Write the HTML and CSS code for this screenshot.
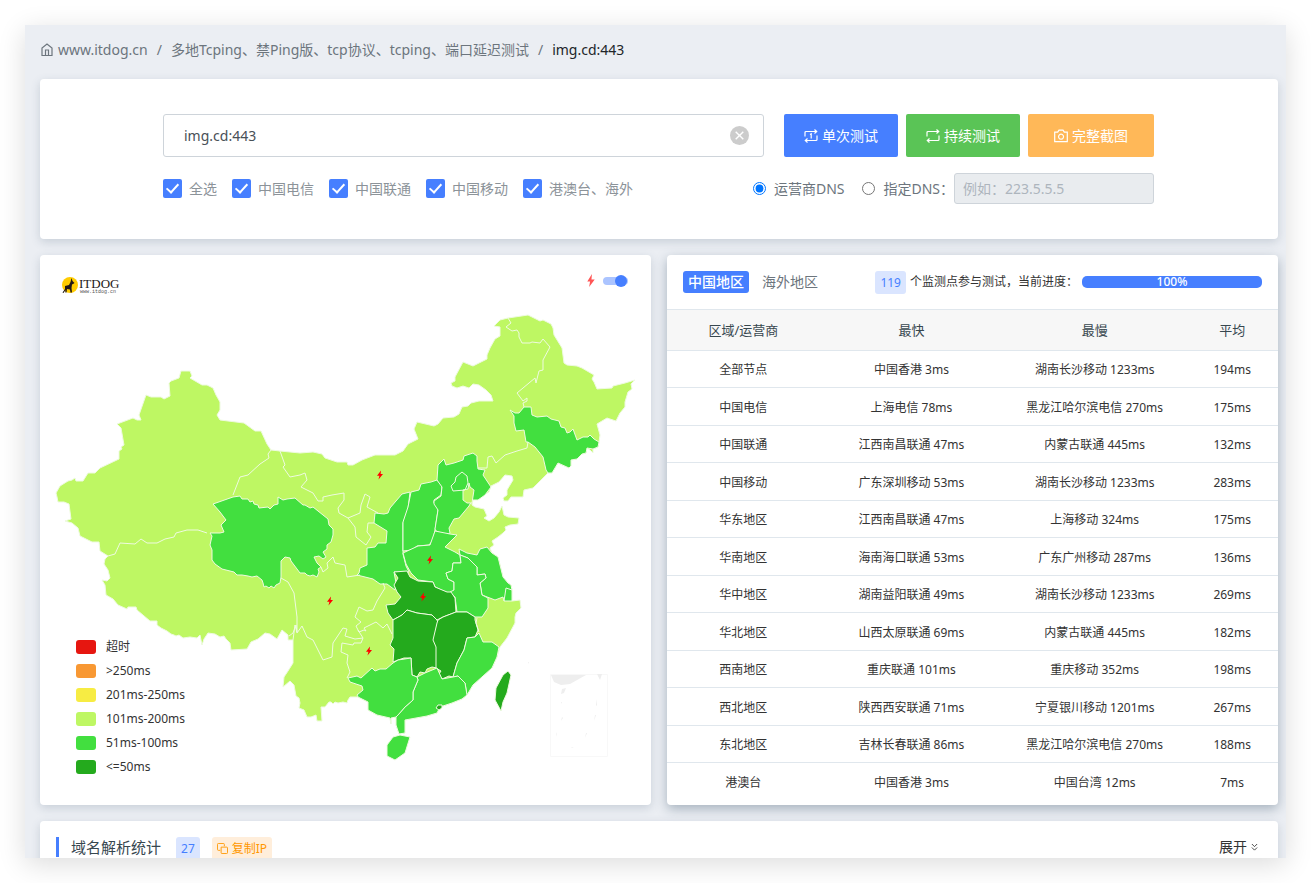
FILE: index.html
```html
<!DOCTYPE html>
<html lang="zh-CN">
<head>
    <meta charset="UTF-8">
    <meta name="viewport" content="width=device-width, initial-scale=1.0">
    <title>img.cd:443 - Tcping</title>
    <link rel="stylesheet" href="styles.css">
</head>
<body>

    <div class="shell">
        <!-- Breadcrumb -->
        <nav class="breadcrumb">
            <a href="#"><svg class="icon" viewBox="0 0 14 14"><path d="M2 12.500V5L7 1l5 4v7.500zM5.500 12.500V7h3v5.500"/></svg>www.itdog.cn</a>
            <span class="sep">/</span>
            <a href="#">多地Tcping、禁Ping版、tcp协议、tcping、端口延迟测试</a>
            <span class="sep">/</span>
            <span class="current">img.cd:443</span>
        </nav>

        <!-- Test form -->
        <form class="card test-form">
            <div class="form-inner">
                <div class="form-row">
                    <div class="host-field">
                        <input type="text" class="host-input" aria-label="域名" value="img.cd:443">
                        <button type="button" class="clear-btn" aria-label="清空"><svg viewBox="0 0 20 20"><path d="M6 6l8 8M14 6l-8 8"/></svg></button>
                    </div>
                    <div class="actions">
                        <button type="button" class="btn btn-blue"><svg class="icon" viewBox="0 0 14 14"><path d="M1 7.500V3.500a1 1 0 0 1 1-1h11M10.500.5l2.200 2-2.200 2M13 6.500v4a1 1 0 0 1-1 1H1M3.500 9.500l-2.200 2 2.200 2M6 5.500l1.200-.7v4.700"/></svg>单次测试</button>
                        <button type="button" class="btn btn-green"><svg class="icon" viewBox="0 0 14 14"><path d="M1 7.500V3.500a1 1 0 0 1 1-1h11M10.500.5l2.200 2-2.200 2M13 6.500v4a1 1 0 0 1-1 1H1M3.500 9.500l-2.200 2 2.200 2"/></svg>持续测试</button>
                        <button type="button" class="btn btn-orange"><svg class="icon" viewBox="0 0 14 14"><path d="M.7 3.200h3L5 1.200h4l1.300 2h3v9.500H.7zM7 5.200a2.500 2.500 0 1 0 .1 0z"/></svg>完整截图</button>
                    </div>
                </div>
                <div class="form-row">
                    <div class="checks">
                        <label class="check"><input type="checkbox" checked>全选</label>
                        <label class="check"><input type="checkbox" checked>中国电信</label>
                        <label class="check"><input type="checkbox" checked>中国联通</label>
                        <label class="check"><input type="checkbox" checked>中国移动</label>
                        <label class="check"><input type="checkbox" checked>港澳台、海外</label>
                    </div>
                    <div class="dns">
                        <label class="radio"><input type="radio" name="dns" checked>运营商DNS</label>
                        <label class="radio"><input type="radio" name="dns">指定DNS：</label>
                        <input type="text" class="dns-input" aria-label="指定DNS" placeholder="例如：223.5.5.5" disabled>
                    </div>
                </div>
            </div>
        </form>

        <div class="columns">
            <!-- Map -->
            <section class="card map-card">
                <svg class="map" viewBox="40 255 611 550">
                    <defs>
                        <path id="bolt" d="M1-4.500-3 .7-.6.7-1.500 4.500 3-.9.6-.9z"/>
                    </defs>
                    <!-- mainland -->
                    <path class="lv-200" d="M56 493L60 486 68 481 72 480 75 478 76 481 83 481 88 473 95 473 100 468 119 459 119 451 122 449 121 447 124 445 121 428 117 424 133 418 137 420 141 420 139 415 146 395 151 397 161 397 164 399 170 396 169 383 171 381 179 378 181 371 190 371 192 376 190 378 202 385 207 385 213 388 216 395 220 402 220 410 217 415 220 420 244 423 255 431 261 431 267 444 271 450 280 451 300 453 313 452 322 454 325 458 337 462 347 462 348 465 353 465 362 460 375 455 395 455 403 451 408 444 418 439 414 429 417 422 434 426 438 424 443 418 454 417 459 414 462 407 468 406 471 403 479 401 493 401 491 395 486 390 479 385 473 384 469 388 463 386 457 388 452 386 451 383 455 381 455 377 463 362 473 366 487 359 487 355 490 348 495 339 500 336 500 327 494 326 500 320 508 318 528 315 540 321 543 320 551 324 553 328 554 335 562 348 564 363 567 365 577 366 582 368 594 375 592 379 594 382 597 389 612 388 613 386 625 383 635 380 631 384 632 389 628 392 625 402 625 407 620 413 616 421 607 418 597 424 600 435 599 442 598 447 593 449 593 453 590 450 587 448 586 453 582 454 577 459 571 460 571 466 569 468 558 463 552 473 548 473 533 488 524 490 523 497 511 497 508 501 504 501 503 498 507 495 507 490 513 480 512 476 505 475 499 482 491 486 489 492 484 495 478 498 473 500 472 505 475 507 484 509 487 516 484 518 489 521 494 518 499 512 502 506 504 515 508 517 519 518 518 524 510 525 505 527 506 530 503 533 498 537 492 541 494 545 490 548 492 553 498 557 503 577 508 583 511 585 512 590 512 601 520 600 521 608 516 613 515 617 515 623 507 638 500 647 497 657 492 668 484 675 473 685 467 695 462 699 452 703 440 707 437 713 427 716 405 720 405 733 399 734 396 725 396 717 391 718 391 724 390 718 377 715 368 710 368 702 358 697 350 697 348 700 347 703 343 702 338 703 335 702 333 704 331 702 329 702 325 707 321 707 322 721 317 721 316 715 311 717 307 717 304 710 299 708 300 703 299 698 296 696 294 685 290 681 283 687 284 677 288 671 293 663 293 640 288 640 288 635 282 630 277 639 270 634 265 633 258 639 251 642 247 649 231 650 230 643 226 639 224 636 220 637 215 634 208 633 204 639 202 645 200 635 197 638 190 637 183 638 179 635 176 636 174 635 171 634 167 631 161 628 157 625 157 621 150 621 137 610 136 607 128 607 127 609 118 605 113 599 106 595 105 585 102 580 107 581 110 578 108 570 104 564 105 559 108 556 100 551 99 542 92 542 80 536 78 528 72 523 65 521 71 519 69 504 64 502 58 502 57 497z"/>
                    <!-- provinces -->
                    <path class="lv-100" d="M213 504l20-7 7-1 2 3 6 0 2 3 3-1 1 3 4 1 1 3 9-1 2 2 4-4 4-1 0-7 5 3 4-1 8-1 8 7 2 0 5 3 3-1 5 4 10 8 1 6 4 4 0 6-2 7-4 3 0 4-4 3 3 5-3 2-4-3-5 1 3 6 4 4-3 2 1 3-2 5-4-2-3 1-3-1-2-2-5 0-9-12-1-3-5-1-4 4 0 16-1 6-4 2-2 3-3-2-2 2-3-2-2 1-1-4-1-3-5-4-5 1-4-1-6-1-5 0-3-3-12-3-7-5-3-4 0-10-2-5 2-9-2-3 10 0 4-1-3-7 5-5-6-8z"/>
                    <path class="lv-100" d="M510 410L515 413 519 413 524 407 531 407 532 415 537 417 547 416 551 419 559 421 561 427 565 428 567 433 570 432 573 429 577 440 583 437 588 437 590 435 594 439 599 442 598 447 593 449 587 448 586 453 582 454 577 459 571 460 571 466 569 468 558 463 552 473 548 473 546 470 543 457 535 447 528 442 526 442 524 430 516 431 514 423 514 416z"/>
                    <path class="lv-100" d="M410 492l-8 2-12 14-2 5-4 1-9-1-1 10 13 8-1 12-8 0-3 4-8 1 0 17-7 3-1 5-2 2 16 4 7 5 7 0 8 6 1-7-2-11 15 0-3-6-3-12 0-31 5-14z"/>
                    <path class="lv-100" d="M411 492l8-2 2-6 10-2 6-2 5 6-1 9-7 5 0 3 4 3 0 4-3 20-2 10-4 5-12 1-5 4-9 1 0-29 5-15z"/>
                    <path class="lv-100" d="M437 480l1-15 6-6 2 6 8-2 9-3 1-4 9-3 4 3 0 5 1 8 7 1-2 5 8 12-6 8-7 5-5 0-3 4-1 2-10 12-5 1-5 9 1 5-4 2-10-4-1-2 3-19-4-6 0-3 7-5 1-9z"/>
                    <path class="lv-100" d="M403 553l15-7 12-1 5-14 15 3 7 1-12 12 10 5 5 3 1 8-8 0-1 8-6 2 2 6 6 3 0 10-6 1-13-6-2-5-15-2-7-7-5-9z"/>
                    <path class="lv-100" d="M459 549L467 553 477 555 480 549 487 547 492 553 498 557 503 577 508 583 511 585 512 590 512 601 504 601 503 597 495 600 482 595 480 583 486 578 485 574 477 575 477 567 468 558 460 555z"/>
                    <path class="lv-100" d="M460 555L468 558 477 567 477 575 485 574 486 578 480 583 482 595 488 598 488 608 482 617 475 617 467 612 457 612 455 597 450 592 454 590 454 582 448 579 446 573 452 571 453 563 461 563z"/>
                    <path class="lv-50" d="M394 572l13-1 3 6 8 4 15 1 2 5 12 5 4 0 4 6 1 14-13 5-6 3-5-5-15-2-10-3-5 5-9 5-5-7-2-8 9-1 6-7-4-5-3-7 4-7z"/>
                    <path class="lv-50" d="M393 620l9-5 5-5 10 3 15 2 5 5 1 3-4 17 3 7 0 21-5-1-5 2-2 4-5-1-3 5-5-2-1-17-7 0-6 2-5 2 1-13-4-4 3-7z"/>
                    <path class="lv-50" d="M438 620l5-3 13-5 11 0 8 5 0 3 3 10-3 7-8 1-3 12-7 13-4 14-4-1-7 3-3-5 2-3-5-3 0-21-3-7 4-17z"/>
                    <path class="lv-100" d="M475 637l4-4 4 9 9 0 7 5-2 10-5 11-19 17-6 10-2-12-7-7-5 1 4-14 7-13 3-12z"/>
                    <path class="lv-100" d="M417 677l8-4 12-5 5 11 11-2 5-1 7 7 2 12-5 4-10 4-12 4-3 6-10 3-22 4 0 13-6 1-3-9 0-8 2-2 7-8 8-7 0-8 5-12z"/>
                    <path class="lv-100" d="M350 682L348 678 357 676 361 678 372 668 375 671 380 669 386 669 393 663 398 660 411 658 412 675 417 677 418 680 413 692 413 700 405 707 398 715 396 717 391 718 391 724 390 718 377 715 368 710 368 702 358 697 357 695 363 690 362 686z"/>
                    <path class="lv-100" d="M400 735l10 2-5 16-10 7-8-4 0-11 6-8z"/>
                    <path class="lv-50" d="M508 671l3 4-4 18-4 9-2 9-6-11 1-12 7-13z"/>
                    <path class="lv-50" d="M436 708l2-3 4 0 0 3-3 2z"/>
                    <path class="lv-200" d="M469 483l-1 6-5 1 0 10 4 3 5 0 2-13-4-3z"/>
                    <!-- inner borders -->
                    <path class="border" d="M508 318l3 5-5 4 6 4 5-1 2 3 0 4 3 6 8 0 2-1 8 1 3-4 7 8-7 13 0 10-4 1-3 12-1-5-18 15 6 8 4-3 0 3-4 2 1 4"/>
                    <path class="border" d="M528 442l-1 6-10 3-12 4-9 8-4-7-4 1-1 11-9 0M271 450l-3 4 1 4-9 6-12 11-8 2-7 18M108 556l7-2 5-11 15 1 6-5 6 4 10 0 8-4 9-2 2-4 11-3 11 0 9 3"/>
                    <path class="border" d="M280 451l5 14-2 2 7 10 10-2 5-2 2 7-6 7 12 6 5 8 5 0 0-4 9-2 12-2 0 7-6 8 1 5 9 5 12-5 1-8 4-11 5 3-3 10 11 6M348 518l7 9 1 10 10 8 5-8-4-5 1-9 6 0"/>
                    <path class="border" d="M321 567l2 5 5-4-1-5 6-6 2 6 10 2 2 12 13-2M281 578l7 4 6 11 3 24 0 15-1-7-3 8-4 3M383 583l2 5-8 13-4 9-6 1-8-4-4 10 6 5-5 4 3 6 5-2 2 1-2-3 12-6 7 6 4-4 5 10"/>
                    <path class="border" d="M293 640l2-15 2 8 5-7 5 11 6 3 10 20 9-3 1-14 10-15 4 1-2 7 10 3 8-1-5-8M363 638l-2 5-7 0-1 2-11-2-1 9 7 3-1 8 3 9-3 6"/>
                    <path class="border" d="M462 472l5 4 1 7-3 7-12 1-2-5 4-4 1-5zM504 601l2-13 6 2"/>
                    <path class="border" d="M477 618l-1 5 3 9"/>
                    <!-- hot spots -->
                    <use class="bolt" href="#bolt" x="380" y="475"/>
                    <use class="bolt" href="#bolt" x="430" y="560"/>
                    <use class="bolt" href="#bolt" x="423" y="597"/>
                    <use class="bolt" href="#bolt" x="330" y="601"/>
                    <use class="bolt" href="#bolt" x="369" y="651"/>
                    <!-- south sea inset -->
                    <path class="inset-box" d="M550.500 674.500h57v82h-57z"/>
                    <path class="inset" d="M551 675h35l-16 9-9 1-7-3zM597 674l5 0-2 6zM562 689l4-1-2 5-3 1zM596 699l1 6-1 1zM595 715l1 0-2 6zM586 733l1 0-2 5zM561 702l1 0 0 2zM562 717l1 1-2 3zM556 732l1 2 0 3zM572 747l2 0-3 1zM528 662l1 0 0 2z"/>
                    <!-- logo -->
                    <circle cx="70" cy="285" r="8" fill="#fc0"/>
                    <path fill="#221815" d="M71.500 278L72.500 281 74.500 283 73 284 72 284.500 71.500 288 72 292.500 70.500 292.500 70 289.500 67 289 66.500 292.500 65.300 292.500 65.500 290 63.500 293 62.500 292.500 65 289 65 286 69 285 70.500 282z"/>
                    <text class="logo-name" x="79" y="288">ITDOG</text>
                    <text class="logo-url" x="80" y="293">www.itdog.cn</text>
                </svg>
                <label class="switch">
                    <svg viewBox="0 0 8 14"><path d="M5 0 0 8h3L2 14l6-8H4.500z"/></svg>
                    <input type="checkbox" aria-label="闪电" checked>
                </label>
                <ul class="legend">
                    <li><i class="c-out"></i>超时</li>
                    <li><i class="c-over"></i>&gt;250ms</li>
                    <li><i class="c-250"></i>201ms-250ms</li>
                    <li><i class="c-200"></i>101ms-200ms</li>
                    <li><i class="c-100"></i>51ms-100ms</li>
                    <li><i class="c-50"></i>&lt;=50ms</li>
                </ul>
            </section>

            <!-- Results -->
            <section class="card">
                <div class="result-head">
                    <div class="tabs">
                        <button type="button" class="tab active">中国地区</button>
                        <button type="button" class="tab">海外地区</button>
                    </div>
                    <div class="status">
                        <span class="badge">119</span>
                        <span>个监测点参与测试，当前进度：</span>
                        <div class="progress">100%</div>
                    </div>
                </div>
                <table class="result-table">
                    <thead>
                        <tr><th>区域/运营商</th><th>最快</th><th>最慢</th><th>平均</th></tr>
                    </thead>
                    <tbody>
                        <tr><td>全部节点</td><td>中国香港 3ms</td><td>湖南长沙移动 1233ms</td><td>194ms</td></tr>
                        <tr><td>中国电信</td><td>上海电信 78ms</td><td>黑龙江哈尔滨电信 270ms</td><td>175ms</td></tr>
                        <tr><td>中国联通</td><td>江西南昌联通 47ms</td><td>内蒙古联通 445ms</td><td>132ms</td></tr>
                        <tr><td>中国移动</td><td>广东深圳移动 53ms</td><td>湖南长沙移动 1233ms</td><td>283ms</td></tr>
                        <tr><td>华东地区</td><td>江西南昌联通 47ms</td><td>上海移动 324ms</td><td>175ms</td></tr>
                        <tr><td>华南地区</td><td>海南海口联通 53ms</td><td>广东广州移动 287ms</td><td>136ms</td></tr>
                        <tr><td>华中地区</td><td>湖南益阳联通 49ms</td><td>湖南长沙移动 1233ms</td><td>269ms</td></tr>
                        <tr><td>华北地区</td><td>山西太原联通 69ms</td><td>内蒙古联通 445ms</td><td>182ms</td></tr>
                        <tr><td>西南地区</td><td>重庆联通 101ms</td><td>重庆移动 352ms</td><td>198ms</td></tr>
                        <tr><td>西北地区</td><td>陕西西安联通 71ms</td><td>宁夏银川移动 1201ms</td><td>267ms</td></tr>
                        <tr><td>东北地区</td><td>吉林长春联通 86ms</td><td>黑龙江哈尔滨电信 270ms</td><td>188ms</td></tr>
                        <tr><td>港澳台</td><td>中国香港 3ms</td><td>中国台湾 12ms</td><td>7ms</td></tr>
                    </tbody>
                </table>
            </section>
        </div>

        <!-- DNS statistics -->
        <section class="card stat-card">
            <h2 class="stat-title">域名解析统计</h2>
            <span class="badge">27</span>
            <button type="button" class="copy-btn"><svg viewBox="0 0 12 12"><path d="M8 3.500v-2a1 1 0 0 0-1-1H1.500a1 1 0 0 0-1 1V7a1 1 0 0 0 1 1h2M4.500 4.500h6a1 1 0 0 1 1 1v5a1 1 0 0 1-1 1h-5a1 1 0 0 1-1-1z"/></svg>复制IP</button>
            <button type="button" class="expand-btn">展开<svg viewBox="0 0 8 10"><path d="M1 1l3 3 3-3M1 5l3 3 3-3"/></svg></button>
        </section>
    </div>

</body>
</html>
```
FILE: styles.css
```css
/* Global */
* {
    box-sizing: border-box;
}

body {
    margin: 0;
    padding: 25px;
    background: #fff;
    color: #333;
    font: 14px/20px "Noto Sans", "Noto Sans CJK SC", sans-serif;
}

button, input {
    font: inherit;
    margin: 0;
}

button {
    border: none;
    background: none;
    padding: 0;
    cursor: pointer;
}

.shell {
    height: calc(100vh - 50px);
    overflow: hidden;
    padding: 15px 8px 0 15px;
    background: #ebeef3;
    box-shadow: 0 6px 26px rgba(0, 0, 0, 0.14);
}

.card {
    background: #fff;
    border-radius: 4px;
    box-shadow: 0 3px 10px rgba(62, 87, 111, 0.2);
    margin-bottom: 16px;
}

.icon {
    width: 14px;
    height: 14px;
    fill: none;
    stroke: currentColor;
    stroke-width: 1.2;
}

/* Breadcrumb */
.breadcrumb {
    display: flex;
    align-items: center;
    gap: 9px;
    height: 20px;
    margin-bottom: 19px;
    white-space: nowrap;
}

.breadcrumb a {
    display: flex;
    align-items: center;
    gap: 4px;
    color: #6c757d;
    text-decoration: none;
}

.sep {
    color: #6c757d;
}

.current {
    color: #212529;
}

/* Form */
.test-form {
    padding: 35px 21px 35px 20px;
}

.form-inner {
    max-width: 991px;
    margin: 0 auto;
}

.form-row {
    display: flex;
    justify-content: space-between;
    align-items: center;
    gap: 20px;
}

.form-row + .form-row {
    margin-top: 16px;
}

.host-field {
    position: relative;
    flex: 1;
}

.host-input {
    display: block;
    width: 100%;
    height: 43px;
    padding: 0 50px 0 20px;
    border: 1px solid #ced4da;
    border-radius: 3px;
    color: #495057;
}

.clear-btn {
    position: absolute;
    right: 15px;
    top: 12px;
    width: 19px;
    height: 19px;
    border-radius: 50%;
    background: #ccc;
}

.clear-btn svg {
    display: block;
    stroke: #fff;
    stroke-width: 1.5;
}

.actions {
    display: flex;
    gap: 8px;
}

.btn {
    display: flex;
    align-items: center;
    gap: 4px;
    height: 43px;
    padding: 0 20px;
    border-radius: 2px;
    color: #fff;
}

.btn-blue {
    background: #467fff;
}

.btn-green {
    background: #5ac456;
}

.btn-orange {
    background: #ffb858;
    padding: 0 26px;
}

.checks, .dns {
    display: flex;
    align-items: center;
    gap: 15px;
}

.check, .radio {
    display: flex;
    align-items: center;
    gap: 7px;
    white-space: nowrap;
}

.check {
    color: #8c9399;
}

.radio {
    gap: 8px;
    color: #6c757d;
}

.radio input {
    width: 13px;
    height: 13px;
}

.dns {
    gap: 18px;
}

.radio:nth-child(2) {
    margin-right: -18px;
}

.check input {
    appearance: none;
    display: grid;
    place-items: center;
    width: 19px;
    height: 19px;
    border-radius: 2px;
    background: #467fff;
}

.check input::after {
    content: "";
    width: 5px;
    height: 10px;
    margin-bottom: 3px;
    border: solid #fff;
    border-width: 0 2px 2px 0;
    transform: rotate(42deg);
}

.dns-input {
    width: 200px;
    height: 31px;
    padding: 0 8px;
    border: 1px solid #ced4da;
    border-radius: 3px;
    background: #e9ecef;
}

.dns-input::placeholder {
    color: #adb5bd;
}

/* Columns */
.columns {
    display: grid;
    grid-template-columns: 1fr 1fr;
    gap: 16px;
    margin-bottom: 16px;
}

.columns .card {
    margin-bottom: 0;
}

.columns .card + .card {
    box-shadow: 0 4px 12px rgba(62, 87, 111, 0.4);
}

/* Map */
.map-card {
    position: relative;
}

.map {
    display: block;
    width: 100%;
}

.map path {
    stroke-linejoin: round;
}

.lv-200, .lv-100, .lv-50 {
    stroke: #eefae0;
    stroke-width: 1;
}

.lv-200, .c-200 {
    fill: #bef763;
    background: #bef763;
}

.lv-100, .c-100 {
    fill: #42df3f;
    background: #42df3f;
}

.lv-50, .c-50 {
    fill: #24aa1d;
    background: #24aa1d;
}

.c-250 {
    background: #f7ec43;
}

.c-over {
    background: #f89833;
}

.c-out {
    background: #e61610;
}

.border {
    fill: none;
    stroke: #eefae0;
}

.bolt {
    fill: #f00;
}

.inset {
    fill: #eee;
}

.inset-box {
    fill: none;
    stroke: #f8f8f8;
}

.logo-name {
    font: 13px "Liberation Serif", serif;
    fill: #221815;
}

.logo-url {
    font: 5px "Liberation Mono", monospace;
    fill: #555;
}

.switch {
    position: absolute;
    top: 19px;
    right: 23px;
    display: flex;
    align-items: center;
    gap: 8px;
}

.switch svg {
    width: 8px;
    height: 13px;
    fill: #f55;
}

.switch input {
    appearance: none;
    width: 25px;
    height: 8px;
    border-radius: 4px;
    background: #abc4ff;
}

.switch input::after {
    content: "";
    display: block;
    width: 12px;
    height: 12px;
    margin: -2px 0 0 12px;
    border-radius: 50%;
    background: #467fff;
}

.legend {
    position: absolute;
    left: 36px;
    bottom: 26px;
    margin: 0;
    padding: 0;
    list-style: none;
    font-size: 12px;
    line-height: 24px;
}

.legend li {
    display: flex;
    align-items: center;
    gap: 10px;
}

.legend i {
    width: 20px;
    height: 14px;
    border-radius: 3px;
}

/* Results */
.result-head {
    display: flex;
    justify-content: space-between;
    align-items: center;
    height: 54px;
    padding: 0 16px;
    font-size: 12px;
}

.tabs, .status {
    display: flex;
    align-items: center;
    white-space: nowrap;
}

.tabs {
    gap: 8px;
}

.status {
    gap: 4px;
}

.tab {
    height: 22px;
    padding: 0 5px;
    border-radius: 3px;
    color: #6c757d;
    font-size: 14px;
}

.tab.active {
    background: #467fff;
    color: #fff;
    font-weight: 500;
}

.badge {
    height: 23px;
    padding: 0 5px;
    border-radius: 3px;
    background: #dae5ff;
    color: #467fff;
    font-size: 12px;
    line-height: 23px;
}

.progress {
    width: 180px;
    height: 12px;
    border-radius: 5px;
    background: #467fff;
    color: #fff;
    font-weight: 500;
    line-height: 12px;
    text-align: center;
}

.result-table {
    width: 100%;
    border-collapse: separate;
    border-spacing: 0;
    table-layout: fixed;
    text-align: center;
    font-size: 12px;
    line-height: 18px;
}

.result-table th {
    height: 42px;
    padding: 0 0 1px;
    border-top: 1px solid #e0e7ed;
    border-bottom: 1px solid #e0e7ed;
    background: #f7f7f7;
    color: #37474f;
    font-size: 13px;
    font-weight: normal;
}

.result-table th:nth-child(1) {
    width: 25%;
}

.result-table th:nth-child(2) {
    width: 30%;
}

.result-table th:nth-child(4) {
    width: 15%;
}

.result-table td {
    height: 37px;
    padding: 2px 0 0;
    border-bottom: 1px solid #e0e7ed;
}

.result-table tr:nth-child(even) td {
    height: 38px;
}

.result-table tr:last-child td {
    border-bottom: none;
}

/* DNS statistics */
.stat-card {
    display: flex;
    align-items: flex-start;
    gap: 12px;
    padding: 16px;
}

.stat-title {
    margin: 0 3px 0 0;
    padding-left: 12px;
    border-left: 3px solid #467fff;
    color: #37474f;
    font-size: 15px;
    font-weight: normal;
    line-height: 20px;
}

.copy-btn {
    display: flex;
    align-items: center;
    gap: 4px;
    height: 23px;
    padding: 0 5px;
    border-radius: 3px;
    background: #ffeedb;
    color: #ff9800;
    font-size: 12px;
}

.copy-btn svg {
    width: 11px;
    height: 11px;
    fill: none;
    stroke: currentColor;
}

.expand-btn {
    display: flex;
    align-items: center;
    gap: 4px;
    margin-left: auto;
    margin-right: 4px;
    color: #333;
}

.expand-btn svg {
    width: 7px;
    height: 9px;
    fill: none;
    stroke: currentColor;
}
```
